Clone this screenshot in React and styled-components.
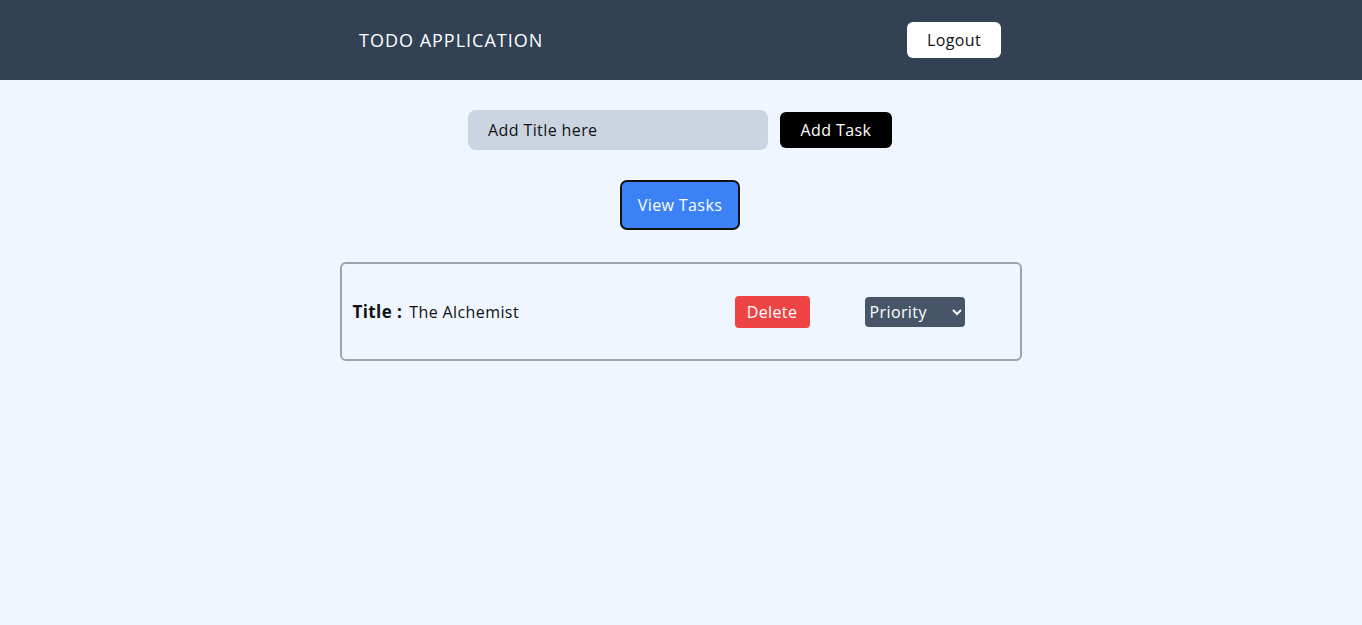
import React, { useState } from "react";
import styled, { createGlobalStyle } from "styled-components";

const GlobalStyle = createGlobalStyle`
  * { box-sizing: border-box; }
  body {
    margin: 0;
    background: #eff6ff;
    font-family: "Open Sans", "Liberation Sans", sans-serif;
    letter-spacing: 0.4px;
  }
`;

const Header = styled.header`
  background: #334155;
  height: 80px;
  display: flex;
  justify-content: center;
`;

const HeaderInner = styled.div`
  width: 682px;
  padding: 0 21px 0 19px;
  display: flex;
  align-items: center;
  justify-content: space-between;
`;

const Brand = styled.h1`
  margin: 0;
  color: #fff;
  font-size: 18px;
  font-weight: 400;
  letter-spacing: 1px;
`;

const Button = styled.button`
  font-family: inherit;
  font-size: 16px;
  letter-spacing: inherit;
  border: none;
  cursor: pointer;
  color: ${(p) => p.$color || "#fff"};
  background: ${(p) => p.$bg};
  width: ${(p) => p.$w}px;
  height: ${(p) => p.$h}px;
  border-radius: ${(p) => p.$r || 6}px;
  padding: 0;
`;

const Main = styled.main`
  display: flex;
  flex-direction: column;
  align-items: center;
  padding-top: 30px;
`;

const AddRow = styled.form`
  display: flex;
  align-items: center;
  gap: 12px;
  margin-right: 2px;
`;

const TitleInput = styled.input`
  width: 300px;
  height: 40px;
  border: none;
  border-radius: 8px;
  background: #cbd5e1;
  padding: 0 20px;
  font-family: inherit;
  font-size: 16px;
  letter-spacing: inherit;
  color: #111;
  outline: none;
  &::placeholder { color: #111; }
`;

const ViewButton = styled(Button)`
  margin: 30px 2px 0 0;
  border: 2px solid #111;
  border-radius: 7px;
`;

const Card = styled.div`
  margin: 32px 1px 0 0;
  width: 682px;
  height: 99px;
  border: 2px solid #9ca3af;
  border-radius: 6px;
  display: grid;
  grid-template-columns: 1fr auto auto;
  column-gap: 55px;
  align-items: center;
  padding: 0 55px 0 11px;
`;

const TaskTitle = styled.div`
  font-size: 16px;
  color: #111;
  b {
    font-weight: 700;
    font-size: 17px;
    margin-right: 7px;
  }
`;

const PrioritySelect = styled.select`
  width: 100px;
  height: 30px;
  background: #475569;
  color: #fff;
  border: none;
  border-radius: 4px;
  font-family: inherit;
  font-size: 16px;
  letter-spacing: inherit;
  padding: 0 0 0 1px;
`;

export default function App() {
  const [title, setTitle] = useState("");
  const [priority, setPriority] = useState("");
  return (
    <>
      <GlobalStyle />
      <Header>
        <HeaderInner>
          <Brand>TODO APPLICATION</Brand>
          <Button $bg="#fff" $color="#111" $w={94} $h={36}>
            Logout
          </Button>
        </HeaderInner>
      </Header>
      <Main>
        <AddRow onSubmit={(e) => e.preventDefault()}>
          <TitleInput
            placeholder="Add Title here"
            value={title}
            onChange={(e) => setTitle(e.target.value)}
          />
          <Button $bg="#000" $w={112} $h={36}>
            Add Task
          </Button>
        </AddRow>
        <ViewButton $bg="#3b82f6" $w={120} $h={50}>
          View Tasks
        </ViewButton>
        <Card>
          <TaskTitle>
            <b>Title :</b>The Alchemist
          </TaskTitle>
          <Button $bg="#ef4444" $w={75} $h={32} $r={4}>
            Delete
          </Button>
          <PrioritySelect value={priority} onChange={(e) => setPriority(e.target.value)}>
            <option value="">Priority</option>
            <option value="high">High</option>
            <option value="medium">Medium</option>
            <option value="low">Low</option>
          </PrioritySelect>
        </Card>
      </Main>
    </>
  );
}
